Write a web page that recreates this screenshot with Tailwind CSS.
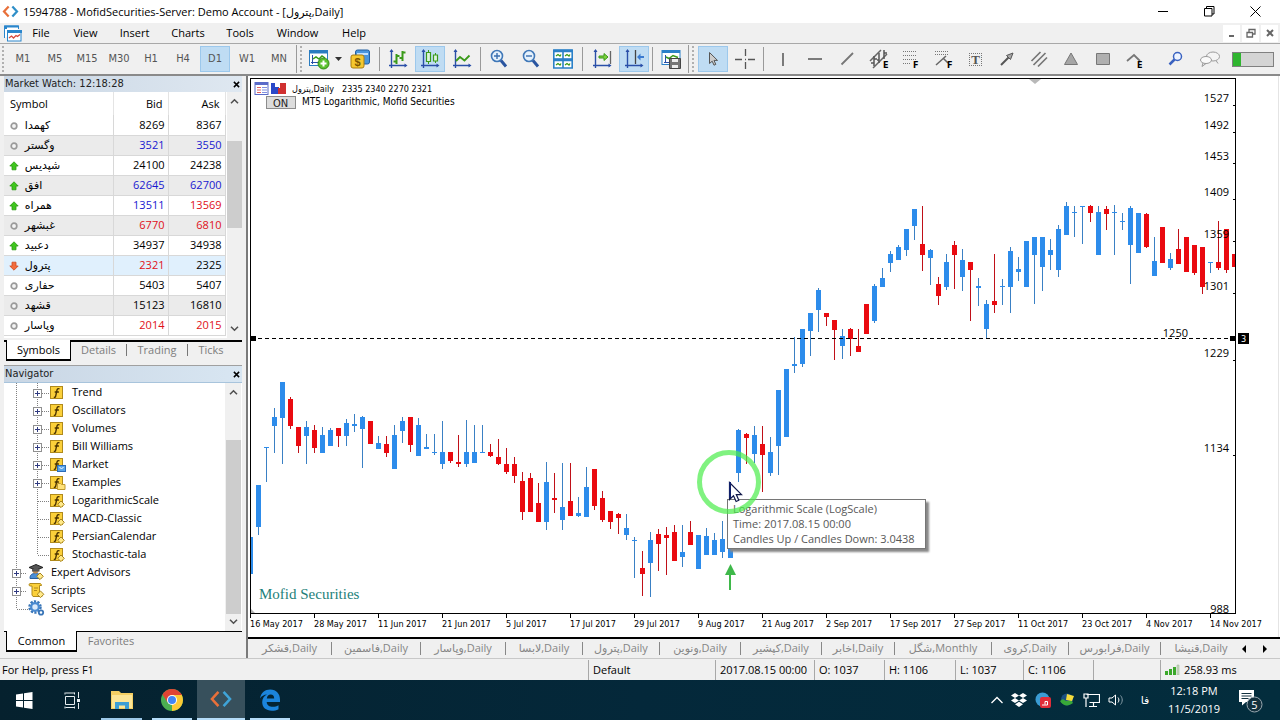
<!DOCTYPE html>
<html lang="en">
<head>
<meta charset="utf-8">
<title>1594788 - MofidSecurities-Server: Demo Account</title>
<script src="https://cdn.jsdelivr.net/npm/@tailwindcss/browser@4"></script>
</head>
<body class="flex min-h-screen flex-col overflow-hidden bg-[#f0f0f0] font-['Open_Sans','DejaVu_Sans',sans-serif] text-[11px] leading-4 text-black">

<svg class="hidden">
  <symbol id="mt" viewBox="0 0 18 14"><path d="M7 1.500 2 7l5 5.500" fill="none" stroke="#e8703a" stroke-width="2.400"/><path d="M11 1.500 16 7l-5 5.500" fill="none" stroke="#2f8fc8" stroke-width="2.400"/></symbol>
  <symbol id="axes" viewBox="0 0 20 20"><path d="M3.500 1v18M1 16.500h17" stroke="#2a4fa8" stroke-width="1.400"/><path d="M3.500 0 1.500 3h4zM19.500 16.500l-3-2v4z" fill="#2a4fa8"/></symbol>
  <symbol id="dot" viewBox="0 0 10 10"><circle cx="5" cy="5" r="2.800" fill="#f4f4f4" stroke="#9a9a9a" stroke-width="1.700"/></symbol>
  <symbol id="up" viewBox="0 0 10 10"><path d="M5 .8 9.200 5H7v3.800H3V5H.8z" fill="#3fc51d" stroke="#2b9a12" stroke-width=".8"/></symbol>
  <symbol id="down" viewBox="0 0 10 10"><path d="M5 9.200.8 5H3V1.200h4V5h2.200z" fill="#f26b3c" stroke="#cf4a20" stroke-width=".8"/></symbol>
  <symbol id="cu" viewBox="0 0 10 8"><path d="M1 6l4-4 4 4" fill="none" stroke="#505050" stroke-width="1.800"/></symbol>
  <symbol id="cd" viewBox="0 0 10 8"><path d="M1 2l4 4 4-4" fill="none" stroke="#505050" stroke-width="1.800"/></symbol>
  <symbol id="x" viewBox="0 0 8 8"><path d="M1 1l6 6M7 1 1 7" stroke="#000" stroke-width="1.700"/></symbol>
  <symbol id="plus" viewBox="0 0 9 9"><rect x=".5" y=".5" width="8" height="8" fill="#fff" stroke="#909090"/><path d="M2 4.500h5M4.500 2v5" stroke="#303a80"/></symbol>
  <symbol id="t-plus2" viewBox="0 0 45 18"><path d="M12.500 0v18M33.500 0v18M38 10.500h7" stroke="#808080" stroke-dasharray="1 1"/><use href="#plus" x="29" y="6" width="9" height="9"/></symbol>
  <symbol id="t-leaf2" viewBox="0 0 45 18"><path d="M12.500 0v18M33.500 0v18M34 10.500h11" stroke="#808080" stroke-dasharray="1 1"/></symbol>
  <symbol id="t-last2" viewBox="0 0 45 18"><path d="M12.500 0v18M33.500 0v10M34 10.500h11" stroke="#808080" stroke-dasharray="1 1"/></symbol>
  <symbol id="t-plus1" viewBox="0 0 24 18"><path d="M12.500 0v18M17 10.500h6" stroke="#808080" stroke-dasharray="1 1"/><use href="#plus" x="8" y="6" width="9" height="9"/></symbol>
  <symbol id="t-last1" viewBox="0 0 24 18"><path d="M12.500 0v10M13 10.500h11" stroke="#808080" stroke-dasharray="1 1"/></symbol>
  <symbol id="f" viewBox="0 0 17 16"><rect x="1.500" y="2.500" width="12" height="12" fill="#fbd03a" stroke="#b08a1c"/><path d="M10.500 4.800c-1.600-.6-2.300.2-2.600 1.700L6.700 12c-.2 1-.8 1.500-1.900 1.200M5.700 8h4.200" fill="none" stroke="#4a3200" stroke-width="1.300"/></symbol>
  <symbol id="f-dia" viewBox="0 0 17 16"><use href="#f" width="17" height="16"/><path d="m12 9 3.300 3.300L12 15.600l-3.300-3.300z" fill="#ffe98a" stroke="#a8841a"/></symbol>
  <symbol id="f-mkt" viewBox="0 0 17 16"><use href="#f" width="17" height="16"/><rect x="8.500" y="9.500" width="8" height="6" fill="#5aa4ea" stroke="#2a6cb8"/><path d="m10.500 11 2 2 2-2" fill="none" stroke="#fff"/></symbol>
  <symbol id="f-fold" viewBox="0 0 17 16"><use href="#f" width="17" height="16"/><path d="M8.500 9.500h3l1 1h3.500v5H8.500z" fill="#ffe27a" stroke="#c09a30"/></symbol>
  <symbol id="fib" viewBox="0 0 20 20"><path d="M2 2.500h14M2 6.500h14M2 10.500h14M2 14.500h8" stroke="#777" stroke-width="1.200" stroke-dasharray="1 1"/></symbol>
</svg>

<!-- Title bar -->
<header class="flex h-[23px] items-center bg-white pl-[2px]">
  <svg class="mr-1 h-[13px] w-[17px]"><use href="#mt"/></svg>
  <h1 dir="ltr">1594788 - MofidSecurities-Server: Demo Account - [پترول,Daily]</h1>
  <div class="ml-auto flex pr-[2px]">
    <button aria-label="Minimize" class="grid h-[20px] w-[45px] place-items-center"><svg width="11" height="11"><path d="M0 5.500h10" stroke="#000"/></svg></button>
    <button aria-label="Restore" class="grid h-[20px] w-[46px] place-items-center"><svg width="11" height="11"><path d="M.5 2.500h7.500V10H.5zM2.500 2.500v-2H10V8H8" fill="none" stroke="#000"/></svg></button>
    <button aria-label="Close" class="grid h-[20px] w-[46px] place-items-center"><svg width="11" height="11"><path d="M.5.5l10 10M10.500.5l-10 10" stroke="#000"/></svg></button>
  </div>
</header>

<!-- Menu bar -->
<nav class="flex h-[21px] items-center border-b border-[#a8a8a8] pl-1" aria-label="Main menu">
  <svg class="mr-2 h-[17px] w-[18px]" viewBox="0 0 18 17"><path d="M.5 13V1h14v3" fill="#fff" stroke="#2a86cc"/><path d="M0 1.500h15M0 3h3" stroke="#2a86cc" stroke-width="2"/><rect x="3.500" y="5.500" width="13.500" height="10.500" fill="#fff" stroke="#2a86cc"/><path d="M3 6.500h15" stroke="#2a86cc" stroke-width="3"/><path d="m5 13 2.500-2 2 2 2.500-2.500 1.500 1 2.500-2" fill="none" stroke="#d8483a" stroke-width="1.300"/></svg>
  <div class="flex gap-[21px]">
    <button class="w-[22px]">File</button><button class="w-[25px]">View</button><button class="w-[31px]">Insert</button><button class="w-[34px]">Charts</button><button class="w-[28px]">Tools</button><button class="w-[45px]">Window</button><button class="w-[26px]">Help</button>
  </div>
  <div class="ml-auto flex gap-[2px] pr-[2px]">
    <button aria-label="Minimize chart" class="grid h-[17px] w-[17px] place-items-center bg-white"><svg width="10" height="10"><path d="M2 8h5" stroke="#666" stroke-width="2"/></svg></button>
    <button aria-label="Restore chart" class="grid h-[17px] w-[17px] place-items-center bg-white"><svg width="10" height="10"><path d="M1 4.500h5.500V9H1zM3 4V1.500h6V6H7" fill="none" stroke="#666" stroke-width="1.300"/></svg></button>
    <button aria-label="Close chart" class="grid h-[17px] w-[17px] place-items-center bg-white"><svg width="10" height="10"><path d="m2 2 6 6M8 2 2 8" stroke="#666" stroke-width="2"/></svg></button>
  </div>
</nav>

<!-- Toolbars -->
<div class="flex h-[32px] items-center border-b-2 border-[#8a8a8a] font-['DejaVu_Sans_Condensed','DejaVu_Sans',sans-serif] text-[#555]" role="toolbar">
  <span class="ml-[2px] mr-[3px] h-[26px] w-px border-l-2 border-dotted border-[#b0b0b0]"></span>
  <button class="w-8">M1</button><button class="w-8">M5</button><button class="w-8">M15</button><button class="w-8">M30</button><button class="w-8">H1</button><button class="w-8">H4</button>
  <button class="mx-px h-[26px] w-[30px] border border-[#9cc8ec] bg-[#bfdcf3]">D1</button><button class="w-8">W1</button><button class="w-8">MN</button>
  <span class="ml-px mr-[3px] h-[28px] w-px bg-[#9a9a9a]"></span><span class="h-[26px] w-[5px] border-l-2 border-dotted border-[#b0b0b0]"></span>
  <button aria-label="New chart" class="grid w-[28px] place-items-center"><svg width="22" height="21" viewBox="0 0 22 21"><rect x="1.500" y="1.500" width="18" height="15" fill="#fff" stroke="#2a7cc0"/><path d="M1 3h19" stroke="#2a7cc0" stroke-width="3"/><path d="M4.500 6v9M3 13.500h13" stroke="#2a4fa8"/><path d="m5 10 3-2 3 2 3-3 3 2" fill="none" stroke="#3a9a1a" stroke-width="1.500"/><circle cx="15.500" cy="14.500" r="5.500" fill="#5cc030" stroke="#2f8a14"/><path d="M12.500 14.500h6M15.500 11.500v6" stroke="#fff" stroke-width="2"/></svg></button>
  <button aria-label="Chart list" class="grid w-[10px] place-items-center"><svg width="7" height="4"><path d="M0 0h7L3.500 4z" fill="#333"/></svg></button>
  <button aria-label="New order" class="grid w-[34px] place-items-center"><svg width="20" height="20" viewBox="0 0 20 20"><rect x="5.500" y="1" width="14" height="14" rx="2" fill="#4a96dc" stroke="#205ea0"/><path d="M7 5h11" stroke="#bfe0ff" stroke-width="2"/><rect x="1" y="6" width="13" height="13" rx="2" fill="#f5c830" stroke="#a87c10"/><text x="7.500" y="16.500" font-size="11" text-anchor="middle" fill="#7a5400" font-weight="bold" font-family="Liberation Sans">$</text></svg></button>
  <span class="mx-[2px] h-[24px] w-px bg-[#9a9a9a]"></span>
  <button aria-label="Bar chart" class="grid w-8 place-items-center"><svg width="20" height="20"><use href="#axes"/><path d="M8.500 5v10M5.500 12.500h3M8.500 7h3M14.500 2v10M11.500 9h3M14.500 3.500h3" stroke="#3a9a1a" stroke-width="2"/></svg></button>
  <button aria-label="Candlesticks" class="mx-px grid h-[26px] w-[30px] place-items-center border border-[#9cc8ec] bg-[#bfdcf3]"><svg width="20" height="20"><use href="#axes"/><path d="M8.500 1v14M15.500 4v10" stroke="#3a9a1a"/><path d="M6.500 3.500h4v9h-4zM13.500 6h4v6h-4z" fill="#dff3df" stroke="#3a9a1a" stroke-width="1.200"/></svg></button>
  <button aria-label="Line chart" class="grid w-8 place-items-center"><svg width="20" height="20"><use href="#axes"/><path d="m4 12 4-4 4.500 3.500 5-5" fill="none" stroke="#3a9a1a" stroke-width="1.800"/></svg></button>
  <span class="mx-[2px] h-[24px] w-px bg-[#9a9a9a]"></span>
  <button aria-label="Zoom in" class="grid w-8 place-items-center"><svg width="18" height="20" viewBox="0 0 18 20"><circle cx="7" cy="7" r="5.500" fill="#e6f2fc" stroke="#4078b8" stroke-width="1.600"/><path d="M4 7h6M7 4v6" stroke="#3a6fb0" stroke-width="1.400"/><path d="m11 11.500 5 6" stroke="#2a55a0" stroke-width="3"/></svg></button>
  <button aria-label="Zoom out" class="grid w-8 place-items-center"><svg width="18" height="20" viewBox="0 0 18 20"><circle cx="7" cy="7" r="5.500" fill="#e6f2fc" stroke="#4078b8" stroke-width="1.600"/><path d="M4 7h6" stroke="#3a6fb0" stroke-width="1.400"/><path d="m11 11.500 5 6" stroke="#2a55a0" stroke-width="3"/></svg></button>
  <button aria-label="Tile windows" class="grid w-8 place-items-center"><svg width="20" height="20" viewBox="0 0 20 20"><path d="M.8 1h18.400v18H.8zM10 1v18M1 10h18" fill="#fff" stroke="#2a80c8" stroke-width="1.600"/><path d="M1 2h18M1 11h18" stroke="#2a80c8" stroke-width="2.400"/><path d="m3 7 2-1.500L7 7l1-1.500M12 7l2-1.500L16 7l1-1.500M3 16l2-1.500L7 16l1-1.500M12 16l2-1.500 2 1.500 1-1.500" fill="none" stroke="#3a9a1a" stroke-width="1.300"/></svg></button>
  <span class="ml-[3px] mr-[3px] h-[24px] w-px bg-[#9a9a9a]"></span>
  <button aria-label="Auto scroll" class="grid w-8 place-items-center"><svg width="20" height="20"><use href="#axes"/><path d="M18.500 2v13" stroke="#666" stroke-width="1.300"/><path d="M7 7h5V4.500L16 8l-4 3.500V9H7z" fill="#7cd03c" stroke="#3a9a1a"/></svg></button>
  <button aria-label="Chart shift" class="mx-px grid h-[26px] w-[30px] place-items-center border border-[#9cc8ec] bg-[#bfdcf3]"><svg width="20" height="20"><use href="#axes"/><path d="M11.500 1v14" stroke="#444" stroke-width="1.300"/><path d="m13 8 3.500-3.500V7H20v2h-3.500v2.500z" fill="#3a7ad0"/></svg></button>
  <span class="mx-[2px] h-[24px] w-px bg-[#9a9a9a]"></span>
  <button aria-label="Templates" class="grid w-8 place-items-center"><svg width="20" height="20" viewBox="0 0 20 20"><rect x="1" y="1.500" width="18" height="14" fill="#fff" stroke="#2a80c8"/><path d="M1 2.500h18" stroke="#2a80c8" stroke-width="3"/><path d="M4.500 6v8M3 13.500h7" stroke="#2a4fa8"/><path d="m5 8 3 1.500 4-3 5 2" fill="none" stroke="#3a9a1a" stroke-width="1.500"/><path d="M8.500 9.500h11v10h-11z" fill="#777" stroke="#444"/><path d="M11 10h6v3h-6zM11 16h6v3h-6z" fill="#eee"/></svg></button>
  <span class="ml-px mr-[3px] h-[28px] w-px bg-[#9a9a9a]"></span><span class="h-[26px] w-[5px] border-l-2 border-dotted border-[#b0b0b0]"></span>
  <button aria-label="Cursor" class="mx-px grid h-[26px] w-[30px] place-items-center border border-[#9cc8ec] bg-[#bfdcf3]"><svg width="12" height="16" viewBox="0 0 12 16"><path d="M2.500 1.500v11l2.700-2.300 1.800 4 1.800-.8-1.800-4h3.500z" fill="#ccc" stroke="#555"/></svg></button>
  <button aria-label="Crosshair" class="grid w-8 place-items-center"><svg width="20" height="20"><path d="M0 10.500h7M13 10.500h7M10.500 0v7M10.500 13v7M10 10.500h1" stroke="#555" stroke-width="1.300"/></svg></button>
  <span class="ml-[2px] mr-[3px] h-[24px] w-px bg-[#9a9a9a]"></span>
  <button aria-label="Vertical line" class="grid w-8 place-items-center"><svg width="20" height="20"><path d="M10 4v13" stroke="#666" stroke-width="1.700"/></svg></button>
  <button aria-label="Horizontal line" class="grid w-8 place-items-center"><svg width="20" height="20"><path d="M3 10h14" stroke="#666" stroke-width="1.700"/></svg></button>
  <button aria-label="Trend line" class="grid w-8 place-items-center"><svg width="20" height="20"><path d="M4.500 15.500 16 4" stroke="#777" stroke-width="1.800"/></svg></button>
  <button aria-label="Equidistant channel" class="grid w-8 place-items-center"><svg width="20" height="20"><path d="M1 12 12 1M4 19 18 5" stroke="#666" stroke-width="1.500"/><path d="M5 7v10M2 14h3M5 10h3M10 4v10M8 11h2M15 1v9M15 4h3" stroke="#555" stroke-width="1.500"/><text x="14" y="19" font-size="9" font-weight="bold" fill="#000">E</text></svg></button>
  <button aria-label="Fibonacci retracement" class="grid w-8 place-items-center"><svg width="20" height="20"><use href="#fib"/><text x="12" y="19" font-size="9" font-weight="bold" fill="#000">F</text></svg></button>
  <button aria-label="Fibonacci fan" class="grid w-8 place-items-center"><svg width="20" height="20"><path d="M2 2.500h14M2 5.500h14" stroke="#777" stroke-dasharray="1 1"/><path d="m3 16 10-9m-3 2 5 5" fill="none" stroke="#666" stroke-width="1.500"/><text x="14" y="19" font-size="9" font-weight="bold" fill="#000">F</text></svg></button>
  <button aria-label="Text" class="grid w-8 place-items-center"><svg width="20" height="20"><path d="M4 4.500h13M4 16.500h13M4.500 4v13M16.500 4v13" stroke="#777" stroke-dasharray="1 1"/><text x="10.500" y="15" text-anchor="middle" font-family="Liberation Serif" font-size="13" font-weight="bold" fill="#555">T</text></svg></button>
  <button aria-label="Arrow" class="grid w-8 place-items-center"><svg width="20" height="20"><path d="M4 16 12 8" stroke="#555" stroke-width="2"/><path d="M16 4 9.500 6.500l4 4z" fill="#aaa" stroke="#555"/></svg></button>
  <button aria-label="Parallel lines" class="grid w-8 place-items-center"><svg width="20" height="20"><path d="M2.500 12 11.500 3M4.500 16 16.500 4M9 17.500 18 8.500" stroke="#777" stroke-width="1.700"/></svg></button>
  <button aria-label="Triangle" class="grid w-8 place-items-center"><svg width="20" height="20"><path d="m10 4 6.500 11.500h-13z" fill="#a6a6a6" stroke="#777"/></svg></button>
  <button aria-label="Rectangle" class="grid w-8 place-items-center"><svg width="20" height="20"><path d="M3.500 4.500h13v11h-13z" fill="#b0b0b0" stroke="#777"/></svg></button>
  <button aria-label="Elliott wave" class="grid w-8 place-items-center"><svg width="20" height="20"><path d="m2 12 7-6 6 6" fill="none" stroke="#777" stroke-width="1.800"/><text x="12" y="19" font-size="9" font-weight="bold" fill="#000">E</text></svg></button>
  <div class="ml-auto flex items-center pr-[6px]">
    <button aria-label="Search" class="grid w-8 place-items-center"><svg width="16" height="16"><circle cx="9.500" cy="5.500" r="4" fill="#eef4ff" stroke="#3a62c0" stroke-width="1.500"/><path d="m6.500 8.500-5 5" stroke="#3a62c0" stroke-width="2.500"/></svg></button>
    <button aria-label="Chat" class="mr-1 grid w-9 place-items-center"><svg width="22" height="18"><ellipse cx="14" cy="6.500" rx="6.500" ry="4.500" fill="#f4f4f4" stroke="#9a9a9a"/><ellipse cx="7" cy="10" rx="5.500" ry="3.500" fill="#fafafa" stroke="#9a9a9a"/><path d="m4 13-1 3.500L7 13.500M17 10.500l2 3" fill="none" stroke="#9a9a9a"/></svg></button>
    <div class="flex h-[15px] w-[42px] border border-[#808080] bg-[#d4d4d4]"><span class="w-2 bg-[#2fb52f]"></span></div>
  </div>
</div>

<main class="flex flex-1">
  <!-- Docked panels -->
  <aside class="flex w-[248px] flex-none flex-col border-r-2 border-[#7a7a7a] pl-1 pr-1">
    <section class="flex flex-col">
      <h2 class="flex h-[16px] items-center bg-linear-to-r from-[#c9d6e4] to-[#dfe8f1] pl-px font-['DejaVu_Sans_Condensed','DejaVu_Sans',sans-serif] text-[11px] text-[#222]">Market Watch: 12:18:28<button aria-label="Close Market Watch" class="ml-auto mr-[2px]"><svg width="7" height="7"><use href="#x"/></svg></button></h2>
      <div class="flex h-[246px] bg-white">
        <table class="h-[243px] w-[221px] table-fixed border-collapse">
          <colgroup><col class="w-[109px]"><col class="w-[55px]"><col class="w-[57px]"></colgroup>
          <thead><tr class="h-[23px]"><th class="border-r border-[#e4e4e4] pl-[6px] text-left font-normal">Symbol</th><th class="border-r border-[#e4e4e4] pr-[5px] text-right font-normal">Bid</th><th class="border-r border-[#e4e4e4] pr-[5px] text-right font-normal">Ask</th></tr></thead>
          <tbody class="[&_td]:h-[20px] [&_td]:border-b [&_td]:border-r [&_td]:border-[#d8d8d8] [&_td]:p-0 [&_td]:pr-[3px] [&_td]:text-right [&_td:first-child]:text-left [&_svg]:mr-[3px] [&_svg]:ml-[5px] [&_svg]:inline [&_svg]:h-[10px] [&_svg]:w-[10px] [&_svg]:align-middle">
            <tr><td><svg><use href="#dot"/></svg> کهمدا</td><td>8269</td><td>8367</td></tr>
            <tr class="bg-[#ebebeb] text-[#1818d0]"><td class="text-black"><svg><use href="#dot"/></svg> وگستر</td><td>3521</td><td>3550</td></tr>
            <tr><td><svg><use href="#up"/></svg> شپدیس</td><td>24100</td><td>24238</td></tr>
            <tr class="bg-[#ebebeb] text-[#1818d0]"><td class="text-black"><svg><use href="#up"/></svg> افق</td><td>62645</td><td>62700</td></tr>
            <tr><td><svg><use href="#up"/></svg> همراه</td><td class="text-[#1818d0]">13511</td><td class="text-[#e01018]">13569</td></tr>
            <tr class="bg-[#ebebeb] text-[#e01018]"><td class="text-black"><svg><use href="#dot"/></svg> غبشهر</td><td>6770</td><td>6810</td></tr>
            <tr><td><svg><use href="#up"/></svg> دعبید</td><td>34937</td><td>34938</td></tr>
            <tr class="bg-[#e0f0fd]"><td><svg><use href="#down"/></svg> پترول</td><td class="text-[#e01018]">2321</td><td>2325</td></tr>
            <tr><td><svg><use href="#dot"/></svg> حفاری</td><td>5403</td><td>5407</td></tr>
            <tr class="bg-[#ebebeb]"><td><svg><use href="#dot"/></svg> قشهد</td><td>15123</td><td>16810</td></tr>
            <tr class="text-[#e01018]"><td class="text-black"><svg><use href="#dot"/></svg> وپاسار</td><td>2014</td><td>2015</td></tr>
          </tbody>
        </table>
        <div class="ml-px flex w-[16px] flex-col items-center bg-[#f0f0f0] py-[6px]"><svg width="9" height="7"><use href="#cu"/></svg><span class="mt-[36px] h-[87px] w-[15px] bg-[#cdcdcd]"></span><svg class="mt-auto" width="9" height="7"><use href="#cd"/></svg></div>
      </div>
      <div class="mt-[2px] flex h-[21px] border-t-2 border-black text-[#7d7d7d]" role="tablist">
        <button role="tab" class="mt-[-2px] ml-[2px] w-[65px] border-x border-b-2 border-black bg-white text-black">Symbols</button><button role="tab" class="w-[55px] pb-[3px]">Details</button><span class="mt-[2px] mb-[5px] w-px bg-[#777]"></span><button role="tab" class="w-[60px] pb-[3px]">Trading</button><span class="mt-[2px] mb-[5px] w-px bg-[#777]"></span><button role="tab" class="w-[46px] pb-[3px]">Ticks</button>
      </div>
    </section>
    <section class="mt-[4px] flex flex-1 flex-col border-t border-[#a0a0a0]">
      <h2 class="flex h-[17px] items-center border-b border-[#a8c4dc] bg-linear-to-r from-[#c9d6e4] to-[#d8e6f2] pl-px font-['DejaVu_Sans_Condensed','DejaVu_Sans',sans-serif] text-[11px] text-[#222]">Navigator<button aria-label="Close Navigator" class="ml-auto mr-[2px]"><svg width="7" height="7"><use href="#x"/></svg></button></h2>
      <div class="flex h-[248px] bg-white">
        <ul class="flex-1 [&_li]:flex [&_li]:h-[18px] [&_li]:items-center">
          <li><svg class="h-[18px] w-[45px]"><use href="#t-plus2"/></svg><svg class="mr-[6px] h-4 w-[17px]"><use href="#f"/></svg>Trend</li>
          <li><svg class="h-[18px] w-[45px]"><use href="#t-plus2"/></svg><svg class="mr-[6px] h-4 w-[17px]"><use href="#f"/></svg>Oscillators</li>
          <li><svg class="h-[18px] w-[45px]"><use href="#t-plus2"/></svg><svg class="mr-[6px] h-4 w-[17px]"><use href="#f"/></svg>Volumes</li>
          <li><svg class="h-[18px] w-[45px]"><use href="#t-plus2"/></svg><svg class="mr-[6px] h-4 w-[17px]"><use href="#f"/></svg>Bill Williams</li>
          <li><svg class="h-[18px] w-[45px]"><use href="#t-plus2"/></svg><svg class="mr-[6px] h-4 w-[17px]"><use href="#f-mkt"/></svg>Market</li>
          <li><svg class="h-[18px] w-[45px]"><use href="#t-plus2"/></svg><svg class="mr-[6px] h-4 w-[17px]"><use href="#f-fold"/></svg>Examples</li>
          <li><svg class="h-[18px] w-[45px]"><use href="#t-leaf2"/></svg><svg class="mr-[6px] h-4 w-[17px]"><use href="#f-dia"/></svg>LogarithmicScale</li>
          <li><svg class="h-[18px] w-[45px]"><use href="#t-leaf2"/></svg><svg class="mr-[6px] h-4 w-[17px]"><use href="#f-dia"/></svg>MACD-Classic</li>
          <li><svg class="h-[18px] w-[45px]"><use href="#t-leaf2"/></svg><svg class="mr-[6px] h-4 w-[17px]"><use href="#f-dia"/></svg>PersianCalendar</li>
          <li><svg class="h-[18px] w-[45px]"><use href="#t-last2"/></svg><svg class="mr-[6px] h-4 w-[17px]"><use href="#f-dia"/></svg>Stochastic-tala</li>
          <li><svg class="h-[18px] w-[24px]"><use href="#t-plus1"/></svg><svg class="mr-[6px] h-4 w-[17px]" viewBox="0 0 17 16"><path d="M2 14.500c0-4 2-5 5.500-5s5.500 1 5.500 5z" fill="#4a8fd8" stroke="#2a5f9c"/><circle cx="7.500" cy="6.500" r="3" fill="#c08a50"/><path d="m1 3.500 7-3 7 3-7 2.500z" fill="#555" stroke="#222"/><path d="M4 5v2.500h7.500V5" fill="#555"/><path d="m12 9 3.300 3.300L12 15.600l-3.300-3.300z" fill="#ffe98a" stroke="#a8841a"/></svg>Expert Advisors</li>
          <li><svg class="h-[18px] w-[24px]"><use href="#t-plus1"/></svg><svg class="mr-[6px] h-4 w-[17px]" viewBox="0 0 17 16"><path d="M2 1.500h10c1 0 1.500 1 1.500 2h-2v9H14v2H5l-1-1.500V4H2C.8 4 .8 1.500 2 1.500z" fill="#fbd03a" stroke="#b08a1c"/><path d="M6 6h4M6 8.500h3" stroke="#b08a1c"/><path d="m12.500 9 3.300 3.300-3.300 3.300-3.300-3.300z" fill="#ffe98a" stroke="#a8841a"/></svg>Scripts</li>
          <li><svg class="h-[18px] w-[24px]"><use href="#t-last1"/></svg><svg class="mr-[6px] h-4 w-[17px]" viewBox="0 0 17 16"><circle cx="7" cy="7" r="5.500" fill="none" stroke="#3a76b8" stroke-width="2.500" stroke-dasharray="2.200 1.255"/><circle cx="7" cy="7" r="3.800" fill="#dceafa" stroke="#4a8ad0" stroke-width="2.200"/><circle cx="13" cy="12.500" r="2.200" fill="#fff" stroke="#3a76b8" stroke-width="1.800"/></svg>Services</li>
        </ul>
        <div class="mr-px flex w-[16px] flex-col items-center bg-[#f0f0f0] py-[6px]"><svg width="9" height="7"><use href="#cu"/></svg><span class="mt-[44px] h-[174px] w-[15px] bg-[#cdcdcd]"></span><svg class="mt-auto" width="9" height="7"><use href="#cd"/></svg></div>
      </div>
      <div class="flex h-[21px] border-t border-black text-[#7d7d7d]" role="tablist">
        <button role="tab" class="mt-[-1px] ml-[2px] w-[71px] border-x border-b-2 border-black bg-white text-black">Common</button><button role="tab" class="w-[68px] pb-[2px]">Favorites</button>
      </div>
    </section>
  </aside>

  <!-- Chart window -->
  <section class="flex min-w-0 flex-1 flex-col">
    <div class="relative bg-white">
      <svg class="block h-auto w-full" viewBox="248 76 1032 561" font-family="'DejaVu Sans Condensed','DejaVu Sans',sans-serif">
        <defs><clipPath id="plot"><rect x="251" y="79" width="985" height="534"/></clipPath></defs>
        <path d="M1278.500 76v561" stroke="#e4e4e4"/>
        <g id="candles" clip-path="url(#plot)" shape-rendering="crispEdges"></g>
        <g shape-rendering="crispEdges" stroke="#000" fill="none">
          <path d="M250.500 78.500h985v535h-985z"/>
          <path d="M251 338.500h985" stroke-dasharray="4 3"/>
          <path d="M250.500 614v4M314.500 614v4M378.500 614v4M442.500 614v4M506.500 614v4M570.500 614v4M634.500 614v4M698.500 614v4M762.500 614v4M826.500 614v4M890.500 614v4M954.500 614v4M1018.500 614v4M1082.500 614v4M1146.500 614v4M1210.500 614v4"/>
          <path d="M1233 105.500h3M1233 132.500h3M1233 163.500h3M1233 199.500h3M1233 241.500h3M1233 293.500h3M1233 360.500h3M1233 455.500h3"/>
        </g>
        <path d="M251 336h5v5h-5zM1230 336h5v5h-5zM1238 333h11v11h-11z"/>
        <text x="1243.500" y="342" font-size="9" fill="#fff" text-anchor="middle">3</text>
        <path d="M1029 79h12l-6 5z" fill="#b8b8b8"/><path d="M251 609v4h4z" fill="#b0b0b0"/>
        <g font-family="'Open Sans',sans-serif" font-size="11" text-anchor="end">
          <text x="1229" y="102">1527</text><text x="1229" y="129">1492</text><text x="1229" y="160">1453</text><text x="1229" y="196">1409</text><text x="1229" y="238">1359</text><text x="1229" y="290">1301</text><text x="1229" y="357">1229</text><text x="1229" y="452">1134</text><text x="1229" y="613">988</text><text x="1188" y="337">1250</text>
        </g>
        <g font-size="9">
          <text x="250" y="627">16 May 2017</text><text x="314" y="627">28 May 2017</text><text x="378" y="627">11 Jun 2017</text><text x="442" y="627">21 Jun 2017</text><text x="506" y="627">5 Jul 2017</text><text x="570" y="627">17 Jul 2017</text><text x="634" y="627">29 Jul 2017</text><text x="698" y="627">9 Aug 2017</text><text x="762" y="627">21 Aug 2017</text><text x="826" y="627">2 Sep 2017</text><text x="890" y="627">17 Sep 2017</text><text x="954" y="627">27 Sep 2017</text><text x="1018" y="627">11 Oct 2017</text><text x="1082" y="627">23 Oct 2017</text><text x="1146" y="627">4 Nov 2017</text><text x="1210" y="627">14 Nov 2017</text>
        </g>
        <rect x="255" y="82.500" width="13" height="12" fill="#fff" stroke="#5a6ac8"/><path d="M255 84h13" stroke="#5a6ac8" stroke-width="2"/><path d="M257 87.500h4M257 90h4M257 92.500h4" stroke="#e06060"/><path d="M262 87.500h5M262 90h5M262 92.500h5" stroke="#8090e0"/>
        <path d="M271 83h4v4h4v7h-8z" fill="#2a48c8"/><path d="M286 83h-6v5h-2v6h8z" fill="#d03030"/>
        <text x="292" y="92" font-size="9">پترول,Daily</text><text x="342" y="92" font-size="9">2335 2340 2270 2321</text>
        <rect x="266.500" y="96.500" width="29" height="12" fill="#dcdcdc" stroke="#8c8c8c"/><text x="273" y="107" font-size="11" fill="#222">ON</text>
        <text x="302" y="105" font-size="10">MT5 Logarithmic, Mofid Securities</text>
        <text x="259" y="599" font-family="'Liberation Serif',serif" font-size="15" fill="#237f7a">Mofid Securities</text>
        <path d="M730 590v-18" stroke="#3fb84a" stroke-width="2"/><path d="m730.500 564 5.500 11h-11z" fill="#3fb84a"/>
      </svg>
      <div role="tooltip" class="absolute top-[423px] left-[479px] h-[50px] w-[199px] border border-[#767676] bg-white pt-px pl-[5px] leading-[15px] whitespace-nowrap text-[#575757] shadow-[3px_3px_2px_#888]">Logarithmic Scale (LogScale)<br>Time: 2017.08.15 00:00<br>Candles Up / Candles Down: 3.0438</div>
      <svg class="absolute top-[374px] left-[449px]" width="66" height="66"><circle cx="32" cy="32" r="29.500" fill="none" stroke="#4aec4a" stroke-opacity=".7" stroke-width="5"/><path d="M32.500 32.500v17l4-3.800 2.600 5.800 2.700-1.200-2.500-5.700h5.200z" fill="#fff" stroke="#10184a" stroke-width="1.200"/><path d="M33 32v16" stroke="#10206a" stroke-width="2"/></svg>
    </div>
    <div class="flex h-[21px] items-stretch border-t-2 border-black text-[#858585] [&>button]:pb-[2px]" role="tablist">
      <button role="tab" class="w-[83px]">قشکر,Daily</button><span class="my-[3px] w-px bg-[#888]"></span>
      <button role="tab" class="w-[88px]">فاسمین,Daily</button><span class="my-[3px] w-px bg-[#888]"></span>
      <button role="tab" class="w-[84px]">وپاسار,Daily</button><span class="my-[3px] w-px bg-[#888]"></span>
      <button role="tab" class="w-[76px]">لابسا,Daily</button><span class="my-[3px] w-px bg-[#888]"></span>
      <button role="tab" class="w-[76px]">پترول,Daily</button><span class="my-[3px] w-px bg-[#888]"></span>
      <button role="tab" class="w-[80px]">ونوین,Daily</button><span class="my-[3px] w-px bg-[#888]"></span>
      <button role="tab" class="w-[80px]">کپشیر,Daily</button><span class="my-[3px] w-px bg-[#888]"></span>
      <button role="tab" class="w-[72px]">اخابر,Daily</button><span class="my-[3px] w-px bg-[#888]"></span>
      <button role="tab" class="w-[96px]">شگل,Monthly</button><span class="my-[3px] w-px bg-[#888]"></span>
      <button role="tab" class="w-[76px]">کروی,Daily</button><span class="my-[3px] w-px bg-[#888]"></span>
      <button role="tab" class="w-[91px]">فرابورس,Daily</button><span class="my-[3px] w-px bg-[#888]"></span>
      <button role="tab" class="w-[80px]">قنیشا,Daily</button>
      <div class="ml-auto flex gap-4 pr-[12px]"><button aria-label="Scroll tabs left"><svg width="5" height="8"><path d="M4 0v8L0 4z"/></svg></button><button aria-label="Scroll tabs right"><svg width="5" height="8"><path d="M0 0v8l4-4z"/></svg></button></div>
    </div>
  </section>
</main>

<!-- Status bar -->
<footer class="flex h-[22px] items-center border-t border-[#c8c8c8] pl-[2px] whitespace-nowrap [&>span]:flex [&>span]:h-[20px] [&>span]:items-center [&>span]:border-l [&>span]:border-[#a8a8a8] [&>span]:pl-1">
  <p class="flex-1">For Help, press F1</p>
  <span class="w-[127px]">Default</span><span class="w-[99px]">2017.08.15 00:00</span><span class="w-[70px]">O: 1037</span><span class="w-[71px]">H: 1106</span><span class="w-[68px]">L: 1037</span><span class="w-[70px]">C: 1106</span><span class="w-[67px]"></span>
  <span class="w-[120px] gap-1"><svg width="15" height="11"><path d="M0 7h3v4H0zM4 5h3v6H4zM8 3h3v8H8z" fill="#3aa82a"/><path d="M12 1h2v10h-2z" fill="#c8d8c0" stroke="#9ab090" stroke-width=".5"/></svg>258.93 ms</span>
</footer>

<!-- Taskbar -->
<div class="flex h-[40px] items-stretch bg-linear-to-r from-[#05212e] via-[#04283a] to-[#032d3d] text-white">
  <button aria-label="Start" class="grid w-[48px] place-items-center"><svg width="17" height="17"><path d="M0 2.400 7 1.400V8H0zM8 1.200 16.500 0v8H8zM0 9h7v6.600L0 14.600zM8 9h8.500v8L8 15.800z" fill="#fff"/></svg></button>
  <button aria-label="Task view" class="grid w-[48px] place-items-center"><svg width="17" height="17"><path d="M1.500 4.500h9v8h-9zM1 .500v2M10.500.500v2M1.500 1h9M1 16.500v-2M10.500 16.500v-2M1.500 15.500h9M14.500 0v6M14.500 11v6" fill="none" stroke="#e8eef0"/><path d="M13 7h3v3h-3z" fill="#e8eef0"/></svg></button>
  <button aria-label="File Explorer" class="mx-[5px] grid w-[41px] place-items-center border-b-2 border-[#9cc8e8] pt-[2px]"><svg width="22" height="20"><path d="M0 1h8l2 2h12v16H0z" fill="#f4cf63"/><path d="M1 5h20v13H1z" fill="#fce596"/><path d="M4 19v-7h14v7h-4v-3.500H8V19z" fill="#3c9ed4"/></svg></button>
  <button aria-label="Chrome" class="ml-[5px] mr-[5px] grid w-[40px] place-items-center border-b-2 border-[#b4dcf8] pt-[2px]"><svg width="22" height="22" viewBox="-11 -11 22 22"><circle r="11" fill="#4caf50"/><path d="M0 0-9.500-5.500A11 11 0 0 1 9.500-5.500z" fill="#e04434"/><path d="M0 0 9.500-5.500A11 11 0 0 1 0 11z" fill="#fcc934"/><path d="M-9.500-5.500-4.300 2.500 0-5z" fill="#e04434"/><path d="M0-5h9.800L4.300 2.500z" fill="#fcc934"/><path d="M-4.300-5H9.800L9-6.500H-8.800z" fill="#e04434"/><circle r="5" fill="#fff"/><circle r="4" fill="#4285f4"/></svg></button>
  <button aria-label="MetaTrader" class="grid w-[48px] place-items-center border-b-2 border-[#b4dcf8] bg-[#37505c]"><svg width="24" height="18" viewBox="0 0 18 14"><path d="M7 1.500 2 7l5 5.500" fill="none" stroke="#e8703a" stroke-width="2"/><path d="M11 1.500 16 7l-5 5.500" fill="none" stroke="#3fa4d8" stroke-width="2"/></svg></button>
  <button aria-label="Edge" class="ml-[5px] grid w-[40px] place-items-center border-b-2 border-[#b4dcf8] pt-[2px]"><svg width="22" height="22" viewBox="0 0 22 22"><path d="M1 9.500C2 3.500 6 .500 11.200.500 17.500.500 21 5 21 10.500V13H7.700c.2 3.500 3 4.800 6 4.800 2.300 0 4-.5 5.800-1.600v4c-2 1-4.200 1.500-6.700 1.500C7 21.700 3.200 18.500 3.200 13.300c0-3.500 1.800-6.200 4.800-7.700C5 5.800 2.500 7.200 1 9.500zM7.800 9.500h7.400c0-2.600-1.300-4-3.500-4S8.200 7 7.800 9.500z" fill="#1b84dc"/></svg></button>
  <div class="ml-auto flex items-center gap-2">
    <button aria-label="Show hidden icons"><svg width="12" height="8"><path d="m.5 7 5.500-5.500L11.500 7" fill="none" stroke="#fff" stroke-width="1.300"/></svg></button>
    <svg width="16" height="14" viewBox="0 0 16 14"><path d="m4 0 4 2.500L4 5 0 2.500zM12 0l4 2.500L12 5 8 2.500zM4 5l4 2.500L4 10 0 7.500zM12 5l4 2.500-4 2.500-4-2.500zM8 8.800l4 2.500L8 14l-4-2.700z" fill="#fff"/></svg>
    <svg width="16" height="16"><circle cx="7.500" cy="7.500" r="7" fill="#3a9cd4"/><rect x="5" y="5" width="11" height="11" rx="2" fill="#e02c38"/><path d="M7 13h5.500V9.500h-2.500v3" fill="none" stroke="#fff"/></svg>
    <svg width="16" height="14"><circle cx="8" cy="6.500" r="6" fill="#1c4f80"/><path d="M1 8c3 5 8 6 13 2l-2-3c-3 2-6 1-8-1z" fill="#38a838"/><path d="m8 1 7 2-2 5-6-1z" fill="#f4dc3c"/></svg>
    <svg width="17" height="16"><path d="M3.500 2.500h13v8h-10M10.500 11v3M6 14.500h8M1 2h4v4H1zM3 6v9" fill="none" stroke="#fff" stroke-width="1.200"/></svg>
    <svg width="17" height="14"><path d="M1 5h3l3.500-3v10L4 9H1z" fill="none" stroke="#fff"/><path d="M10 4.500c1.200 1.500 1.200 3.500 0 5" fill="none" stroke="#fff"/><path d="M12.500 2.500c2.300 2.500 2.300 6.500 0 9" fill="none" stroke="#8aa0aa"/></svg>
    <span class="w-6 text-center">فا</span>
    <time class="w-[58px] text-center leading-[18px]">12:18 PM<br>11/5/2019</time>
    <button aria-label="Notifications" class="mr-4 ml-[7px]"><svg width="26" height="26"><path d="M1 3h15v12H8l-4 3.500V15H1z" fill="#fff"/><path d="M3.500 6.500h10M3.500 9h10M3.500 11.500h7" stroke="#12303e"/><circle cx="16.500" cy="17.500" r="7.500" fill="#12303e" stroke="#9aa8b0"/><text x="16.500" y="21.500" font-size="11" text-anchor="middle" fill="#fff">5</text></svg></button>
  </div>
</div>

<script>
// One entry per day, 8px apart: [direction, high, bodyTop, bodyBottom, low]
const days = [
["u",537,537,574,574],["u",485,485,527,535],["u",447,447,448,482],["u",408,417,426,453],["u",382,382,418,464],["d",397,399,426,429],["d",427,427,446,453],["u",421,427,436,464],
["d",425,430,448,453],["u",427,435,453,453],["u",428,430,446,446],["d",428,428,436,447],["u",419,423,436,446],["u",414,424,426,432],["u",416,417,429,468],["d",421,421,444,444],
["u",436,443,449,449],["d",436,444,453,457],["u",425,435,469,469],["u",417,421,431,443],["d",417,417,445,452],["u",418,425,456,456],["u",434,447,449,449],["u",434,452,453,455],
["u",421,452,464,469],["d",452,452,461,463],["d",435,462,464,467],["u",420,452,464,467],["u",425,452,463,463],["u",425,452,453,453],["d",444,452,456,457],["d",439,457,464,465],
["d",448,464,472,474],["d",457,464,476,483],["d",472,481,512,520],["d",473,478,512,512],["d",483,503,522,522],["u",462,482,522,530],["d",473,498,500,513],["u",463,507,520,530],
["d",463,501,516,516],["u",497,513,516,517],["u",467,487,517,517],["d",469,469,506,510],["d",491,498,520,522],["d",511,511,522,529],["d",513,514,518,534],["u",514,528,535,540],
["u",537,540,541,578],["d",551,568,574,596],["u",532,540,563,597],["d",529,534,544,571],["d",527,535,538,575],["d",525,532,561,561],["u",525,552,557,567],["d",521,532,545,545],
["u",535,535,569,569],["u",528,536,555,555],["u",533,540,555,555],["u",521,539,552,558],["u",499,499,558,558],["u",429,430,473,482],["d",433,434,438,464],["u",426,435,454,463],
["d",426,444,455,492],["u",437,452,473,476],["u",390,390,446,475],["u",369,369,437,437],["u",337,364,366,373],["u",329,329,364,367],["u",313,313,331,356],["u",288,290,310,332],
["d",313,313,317,326],["d",320,320,330,360],["u",329,336,346,359],["d",328,329,339,356],["d",329,346,352,352],["d",304,304,334,334],["u",284,286,321,323],["u",268,278,287,287],
["u",251,254,263,272],["u",245,247,260,260],["u",229,229,250,256],["u",209,209,226,240],["d",206,244,255,271],["u",249,250,258,285],["d",277,284,296,305],["u",254,262,287,290],
["d",241,245,255,289],["u",249,260,277,291],["d",262,262,270,321],["u",278,286,288,306],["u",300,304,329,338],["d",254,301,305,313],["u",279,286,287,305],["u",247,251,287,313],
["u",257,269,272,281],["u",241,241,287,287],["u",237,237,255,304],["u",237,237,267,291],["u",239,250,255,270],["u",225,229,270,277],["u",202,206,235,235],["u",206,212,213,237],
["u",206,206,207,244],["d",205,206,213,222],["u",206,212,255,255],["d",206,209,214,230],["u",205,212,213,255],["u",213,221,222,230],["u",206,208,245,284],["u",213,213,253,253],
["d",213,214,247,248],["u",237,261,276,276],["d",227,227,263,263],["u",253,259,268,270],["d",229,249,264,264],["d",237,237,272,272],["d",245,245,273,275],["d",247,247,287,294],
["u",262,262,263,273],["d",221,262,268,270],["d",229,229,270,273],["d",254,254,267,267]];
const g = document.getElementById("candles"), ns = "http://www.w3.org/2000/svg";
const bar = (x, y, w, h, fill) => {
  const r = document.createElementNS(ns, "rect");
  Object.entries({ x, y, width: w, height: h, fill }).forEach(([k, v]) => r.setAttribute(k, v));
  g.append(r);
};
days.forEach(([dir, hi, top, bot, lo], i) => {
  const x = 250 + 8 * i, up = dir === "u";
  bar(x, hi, 1, lo - hi, up ? "#3a80c4" : "#c01018");
  bar(x - 2, top, 5, bot - top, up ? "#2d8ceb" : "#ea0a10");
});
</script>
</body>
</html>
